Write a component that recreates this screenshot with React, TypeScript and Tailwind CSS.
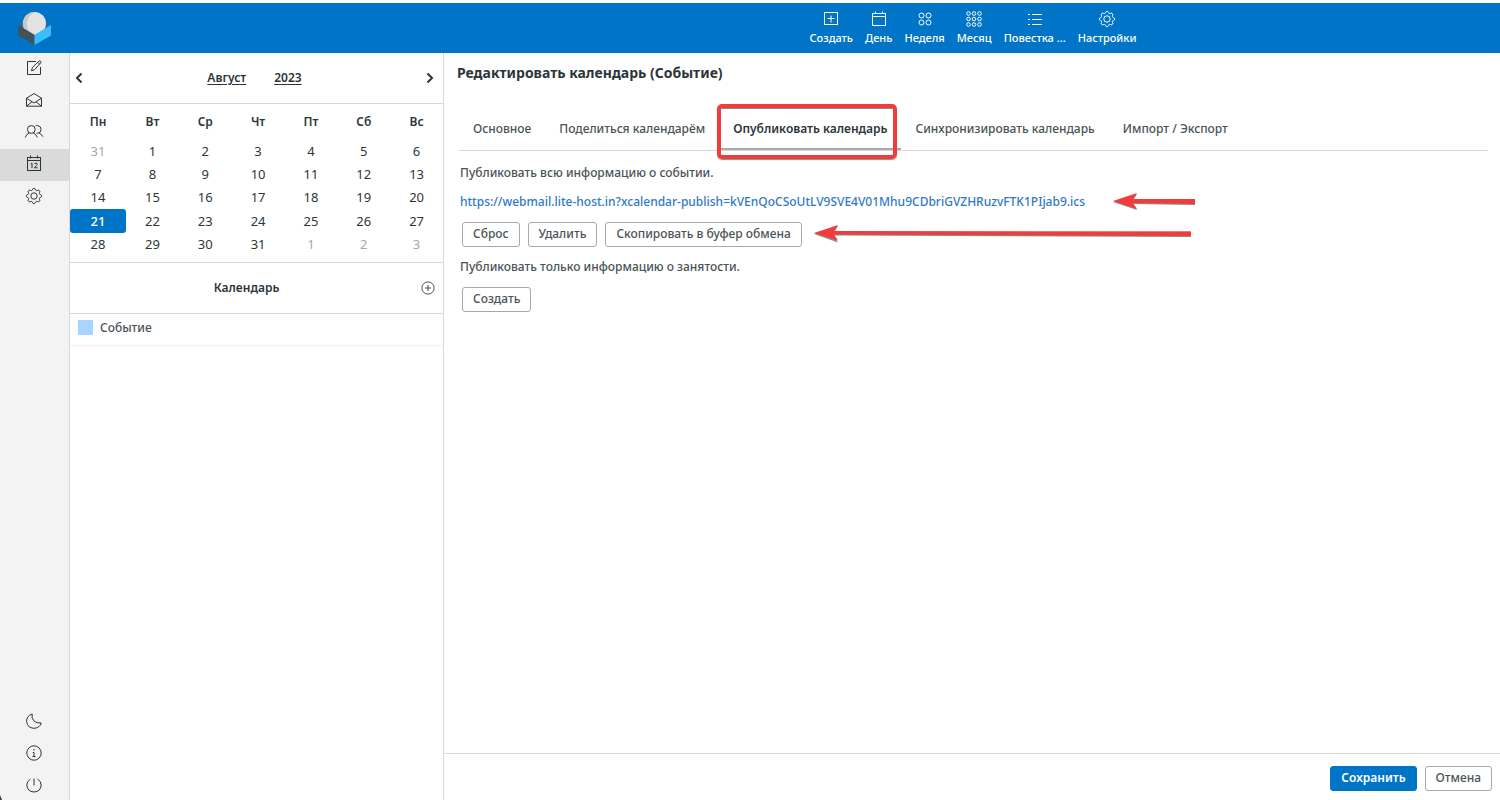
import type { ReactNode } from "react";
import clsx from "clsx";

type IconProps = { children: ReactNode; className?: string };

function Icon({ children, className = "size-4" }: IconProps) {
  return (
    <svg
      viewBox="0 0 16 16"
      fill="none"
      stroke="currentColor"
      strokeWidth="1"
      className={clsx("shrink-0 overflow-visible", className)}
      aria-hidden="true"
    >
      {children}
    </svg>
  );
}

// eight soft teeth around the rim
const gearPoints = Array.from({ length: 64 }, (_, i) => {
  const a = (i / 64) * Math.PI * 2;
  const r = 6.8 + 0.8 * Math.max(-1, Math.min(1, 1.6 * Math.cos(8 * a)));
  return `${(8 + r * Math.cos(a)).toFixed(2)},${(8 + r * Math.sin(a)).toFixed(2)}`;
}).join(" ");

const GearShape = () => (
  <>
    <polygon points={gearPoints} strokeLinejoin="round" />
    <circle cx="8" cy="8" r="3.2" />
  </>
);

const weekDots = [4.5, 11.5];
const monthDots = [2.5, 8, 13.5];

const toolbar: { label: string; icon: ReactNode }[] = [
  {
    label: "Создать",
    icon: (
      <>
        <rect x="1.5" y="1.5" width="13" height="12" />
        <path d="M8 4.5v7M4.5 7.5h7" />
      </>
    ),
  },
  {
    label: "День",
    icon: (
      <>
        <rect x="1.5" y="2.5" width="13" height="12" />
        <path d="M1.5 5.5h13M4.5 .5v2M11.5 .5v2" />
      </>
    ),
  },
  {
    label: "Неделя",
    icon: weekDots.map((y) => weekDots.map((x) => <circle key={`${x}-${y}`} cx={x} cy={y} r="2.5" />)),
  },
  {
    label: "Месяц",
    icon: monthDots.map((y) => monthDots.map((x) => <circle key={`${x}-${y}`} cx={x} cy={y} r="1.8" />)),
  },
  {
    label: "Повестка ...",
    icon: <path d="M1 3.5h2M5 3.5h10M1 8.5h2M5 8.5h10M1 13.5h2M5 13.5h10" />,
  },
  { label: "Настройки", icon: <GearShape /> },
];

const mainNav: { label: string; active?: boolean; icon: ReactNode }[] = [
  {
    label: "Написать",
    icon: (
      <>
        <path d="M10 1.5H1.5v13h13V7" />
        <path d="M5.5 10.8l.8-3L13 1q.8-.6 1.6.2t.2 1.6L8.4 9.8zM11.8 2.2l2 2" />
      </>
    ),
  },
  {
    label: "Почта",
    icon: <path d="M.5 6.2L8 1.5l7.5 4.7v8H.5zM.5 6.2L8 11l7.5-4.8M.5 14.2l5.6-4.5M15.5 14.2L9.9 9.7" />,
  },
  {
    label: "Контакты",
    icon: (
      <>
        <circle cx="5.3" cy="5.5" r="3.9" />
        <path d="M-.8 13.5q1.3-3.5 4.2-4.6M7.2 8.9q2.9 1.1 4.2 4.6" />
        <path d="M9.6 1.9q1.2-.5 2.3-.3q3.2.6 3.2 3.9t-3.3 3.7h-1.3M13 9q2.7 1 3.9 3.7" />
      </>
    ),
  },
  {
    label: "Календарь",
    active: true,
    icon: (
      <>
        <rect x="1.5" y="1.5" width="13" height="13" />
        <path d="M1.5 4.5h13M4.5 -.5v3M11.5 -.5v3" />
        <path d="M4.8 7.9l1.2-.8v5M8.5 8q.4-.9 1.5-.9t1.2 1.1q0 .8-2.7 3.6h3" />
      </>
    ),
  },
  { label: "Настройки", icon: <GearShape /> },
];

const bottomNav: { label: string; icon: ReactNode }[] = [
  {
    label: "Тёмный режим",
    icon: <path d="M6.2 .9Q.5 3 .6 8.4Q1.3 15 8 15.3Q13.5 15.1 15.3 10Q10.5 10.7 7.8 7.8Q5.3 4.8 6.2 .9Z" />,
  },
  {
    label: "О программе",
    icon: (
      <>
        <circle cx="8" cy="8" r="7.2" />
        <path d="M8 4v1.5M6.8 7.5H8V12M6.5 11.5h3" />
      </>
    ),
  },
  {
    label: "Выход",
    icon: <path d="M4.5 2Q.8 4.2 .8 8Q1.3 14.7 8 15Q14.7 14.7 15.2 8Q15.2 4.2 11.5 2M8 1.5v7" />,
  },
];

const weekdays = ["Пн", "Вт", "Ср", "Чт", "Пт", "Сб", "Вс"];
const weeks = [
  [31, 1, 2, 3, 4, 5, 6],
  [7, 8, 9, 10, 11, 12, 13],
  [14, 15, 16, 17, 18, 19, 20],
  [21, 22, 23, 24, 25, 26, 27],
  [28, 29, 30, 31, 1, 2, 3],
];

const tabs = [
  "Основное",
  "Поделиться календарём",
  "Опубликовать календарь",
  "Синхронизировать календарь",
  "Импорт / Экспорт",
];

const publishUrl =
  "https://webmail.lite-host.in?xcalendar-publish=kVEnQoCSoUtLV9SVE4V01Mhu9CDbriGVZHRuzvFTK1PIjab9.ics";

function Logo() {
  return (
    <svg viewBox="0 0 34 34" className="size-[34px]" aria-hidden="true">
      <path d="M1 14L17 5l17 9-17 9z" fill="#2f6b91" />
      <circle cx="17.5" cy="12.5" r="11.5" fill="#e3e3e3" />
      <path d="M17.5 1a11.5 11.5 0 0 0-9 18.7l4.5 2.3q-3-4-3-10t7.5-11z" fill="#c6c8ca" />
      <path d="M1 14l16.5 9.7V34L1 24.5z" fill="#40525c" />
      <path d="M34 14l-16.5 9.7V34L34 24.5z" fill="#37beff" />
    </svg>
  );
}

function Button({ children, primary = false }: { children: ReactNode; primary?: boolean }) {
  return (
    <button
      type="button"
      className={clsx(
        "h-[25px] rounded-[3px] border px-[10px] pb-px leading-5",
        primary
          ? "border-[#0075c8] bg-[#0075c8] font-semibold text-white"
          : "border-[#a9a9a9] bg-white",
      )}
    >
      {children}
    </button>
  );
}

function ArrowLeft({ long = false }: { long?: boolean }) {
  return long ? (
    <svg viewBox="0 2 378 18" className="h-[18px] w-[378px] shrink-0 overflow-visible" aria-hidden="true">
      <path d="M0 10L24 2l-4 6.5L377 7.5v5.5L20 11.5l4 7z" fill="#8b8b8b" />
      <path d="M0 9L24 1l-4 6L377 7.5v4.5L20 10.5l4 6z" fill="#f23b3b" />
    </svg>
  ) : (
    <svg viewBox="0 1 82 18" className="h-[18px] w-[82px] shrink-0" aria-hidden="true">
      <path d="M0 10L24 2l-4 6.5L82 8v5L20 12l4 6z" fill="#8b8b8b" />
      <path d="M0 9L24 1l-4 6L82 7v5L20 11l4 6z" fill="#f23b3b" />
    </svg>
  );
}

function Chevron({ d }: { d: string }) {
  return (
    <svg viewBox="0 0 8 12" className="h-3 w-2" fill="none" stroke="currentColor" strokeWidth="2">
      <path d={d} />
    </svg>
  );
}

function MiniCalendar() {
  return (
    <section>
      <div className="flex h-[51px] items-center justify-between border-b border-[#d9d9d9] px-[5px] text-[#2c363a]">
        <button type="button" aria-label="Предыдущий месяц">
          <Chevron d="M6.5 1.5L2 6l4.5 4.5" />
        </button>
        <div className="flex gap-7 font-semibold">
          <button type="button" className="underline underline-offset-2">Август</button>
          <button type="button" className="underline underline-offset-2">2023</button>
        </div>
        <button type="button" aria-label="Следующий месяц" className="pr-1">
          <Chevron d="M1.5 1.5L6 6l-4.5 4.5" />
        </button>
      </div>
      <div className="border-b border-[#d9d9d9] pb-[6px]">
        <table className="h-[152px] w-full table-fixed border-separate border-spacing-0 text-center">
          <colgroup>
            <col className="w-14" />
          </colgroup>
          <thead>
            <tr className="h-[35px]">
              {weekdays.map((day) => (
                <th key={day} className="p-0 font-semibold text-[#2c363a]">
                  {day}
                </th>
              ))}
            </tr>
          </thead>
          <tbody className="text-[13px] font-normal text-[#2c363a]">
            {weeks.map((week, row) => (
              <tr key={row}>
                {week.map((day) => {
                  const outside = (row === 0 && day > 7) || (row === 4 && day < 7);
                  const today = day === 21;
                  return (
                    <td
                      key={day}
                      className={clsx(
                        "p-0",
                        outside && "text-[#a6a9aa]",
                        today && "rounded-[3px] bg-[#0075c8] font-medium text-white",
                      )}
                    >
                      {day}
                    </td>
                  );
                })}
              </tr>
            ))}
          </tbody>
        </table>
      </div>
    </section>
  );
}

export default function App() {
  return (
    <div className="flex min-h-screen flex-col bg-white font-['Noto_Sans',sans-serif] text-[12px] leading-5 font-medium text-[#4a5357]">
      <header className="mt-[3px] flex h-[50px] shrink-0 items-center bg-[#0075c8] text-white">
        <div className="flex w-[446px] shrink-0 pl-[17px]">
          <Logo />
        </div>
        <nav className="flex flex-1 justify-center">
          {toolbar.map((item) => (
            <button
              key={item.label}
              type="button"
              className="flex flex-col items-center gap-[3px] px-[6px] pt-px text-[11px] leading-4"
            >
              <Icon>{item.icon}</Icon>
              {item.label}
            </button>
          ))}
        </nav>
      </header>

      <div className="flex flex-1">
        <aside className="relative flex w-[70px] shrink-0 flex-col justify-between border-r border-[#d9d9d9] bg-[#f3f3f3] text-[#2c363a]">
          <nav>
            {mainNav.map((item) => (
              <a
                key={item.label}
                href="#"
                aria-label={item.label}
                className={clsx(
                  "flex h-8 items-center justify-center pr-px pb-[3px]",
                  item.active && "bg-[#dadada]",
                )}
              >
                <Icon>{item.icon}</Icon>
              </a>
            ))}
          </nav>
          <nav>
            {bottomNav.map((item) => (
              <a
                key={item.label}
                href="#"
                aria-label={item.label}
                className="flex h-8 items-center justify-center pt-[2px] pr-px"
              >
                <Icon>{item.icon}</Icon>
              </a>
            ))}
          </nav>
          <svg viewBox="0 0 2 5" className="absolute bottom-0 left-0 h-[5px] w-[2px]" aria-hidden="true">
            <path d="M0 0l2 5H0z" fill="#4a3a22" />
          </svg>
        </aside>

        <div className="w-[374px] shrink-0 border-r border-[#d9d9d9]">
          <MiniCalendar />
          <div className="grid h-[51px] grid-cols-[1fr_auto_1fr] items-center border-b border-[#d9d9d9] px-2 text-[#2c363a]">
            <h2 className="col-start-2 pr-5 font-semibold">Календарь</h2>
            <button type="button" className="justify-self-end" aria-label="Добавить календарь">
              <Icon className="size-3.5">
                <circle cx="8" cy="8" r="7" />
                <path d="M8 4.5v7M4.5 8h7" />
              </Icon>
            </button>
          </div>
          <ul>
            <li className="flex h-8 items-center gap-[7px] border-b border-[#f1f1f1] px-2 pb-1">
              <span className="size-[15px] bg-[#a8d4ff]" />
              Событие
            </li>
          </ul>
        </div>

        <main className="flex min-w-0 flex-1 flex-col">
          <h1 className="px-[13px] pt-[10px] text-[14px] leading-5 font-bold text-[#2c363a]">
            Редактировать календарь (Событие)
          </h1>
          <div className="mr-3 ml-[15px] flex h-[68px] items-end border-b border-[#d9d9d9]">
            {tabs.map((tab) => {
              const active = tab === "Опубликовать календарь";
              return (
                <button
                  key={tab}
                  type="button"
                  className={clsx(
                    "relative h-10 border-b-2 px-[14px]",
                    active ? "border-[#a9a9a9] font-semibold text-[#2c363a]" : "border-transparent",
                  )}
                >
                  {tab}
                  {active && (
                    <span className="absolute -top-[6px] right-[4px] -bottom-[11px] -left-[2px] rounded-[5px] border-4 border-[#f23b3b] shadow-[0_1px_1px_#8b8b8b,inset_0_1px_0_#8b8b8b]" />
                  )}
                </button>
              );
            })}
          </div>

          <div className="flex flex-col px-4 pt-3">
            <p>Публиковать всю информацию о событии.</p>
            <div className="mt-[9px] flex items-center gap-7">
              <a href={publishUrl} className="text-[#2f7ac6]">
                {publishUrl}
              </a>
              <ArrowLeft />
            </div>
            <div className="mt-[10px] flex items-center gap-3 px-[2px]">
              <div className="flex gap-2">
                <Button>Сброс</Button>
                <Button>Удалить</Button>
                <Button>Скопировать в буфер обмена</Button>
              </div>
              <ArrowLeft long />
            </div>
            <p className="mt-[10px]">Публиковать только информацию о занятости.</p>
            <div className="mt-[10px] flex px-[2px]">
              <Button>Создать</Button>
            </div>
          </div>

          <footer className="mt-auto flex h-[47px] items-start justify-end gap-2 border-t border-[#d9d9d9] px-2 pt-3">
            <Button primary>Сохранить</Button>
            <Button>Отмена</Button>
          </footer>
        </main>
      </div>
    </div>
  );
}
